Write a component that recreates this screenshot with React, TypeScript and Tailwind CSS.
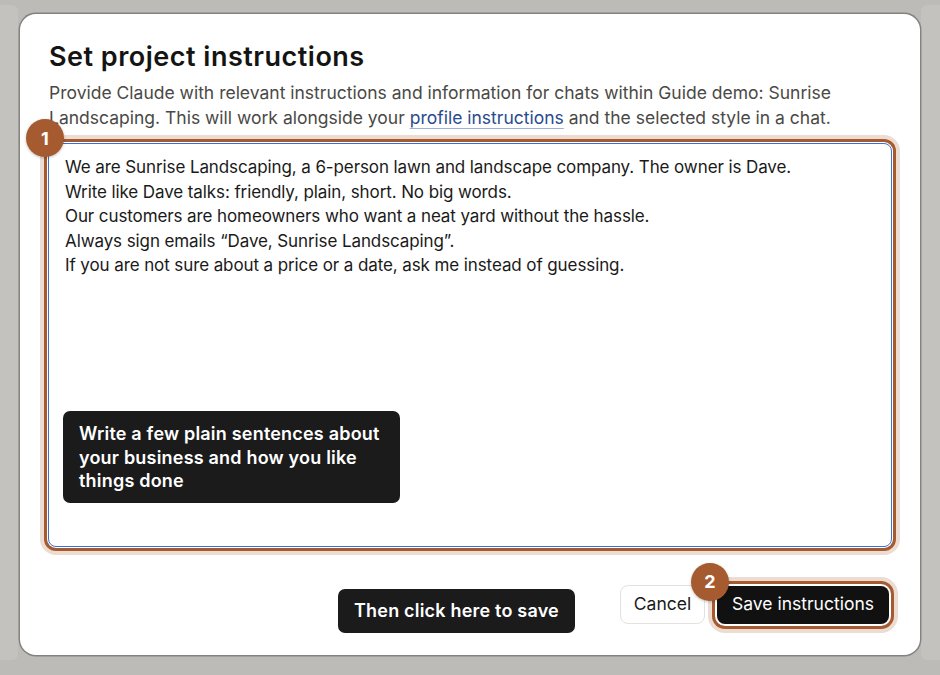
const INSTRUCTIONS = [
  "We are Sunrise Landscaping, a 6-person lawn and landscape company. The owner is Dave.",
  "Write like Dave talks: friendly, plain, short. No big words.",
  "Our customers are homeowners who want a neat yard without the hassle.",
  "Always sign emails \u201cDave, Sunrise Landscaping\u201d.",
  "If you are not sure about a price or a date, ask me instead of guessing.",
].join("\n");

const StepBadge = ({ n, className }: { n: number; className: string }) => (
  <div
    className={`absolute z-10 flex h-[38px] w-[38px] items-center justify-center rounded-full bg-[#a65a2f] text-[18px] font-bold text-white shadow-[0_1px_3px_rgba(0,0,0,0.25)] ${className}`}
  >
    {n}
  </div>
);

const Hint = ({ children, className }: { children: React.ReactNode; className: string }) => (
  <div
    className={`absolute z-10 rounded-[7px] bg-[#1b1b1b] text-[18px] font-semibold leading-[23.5px] tracking-[0.2px] text-white ${className}`}
  >
    {children}
  </div>
);

export default function App() {
  return (
    <div className="flex h-[675px] w-[940px] items-start overflow-hidden bg-[#bcbbb7] font-['Inter',sans-serif]">
      <div className="mt-[5px] h-[655px] w-[18px] shrink-0 rounded-r-[6px] bg-[#c3c2be]" />

      <div className="relative mt-[14px] ml-[2px] flex h-[641px] w-[900px] shrink-0 flex-col rounded-[16px] bg-white px-[28px] pt-[27px] shadow-[0_0_0_1.5px_rgba(0,0,0,0.3)]">
        <h1 className="pl-[1px] text-[27px] font-semibold leading-[32px] tracking-[0.5px] text-[#141413]">
          Set project instructions
        </h1>
        <p className="mt-[7px] pl-[1px] pr-[20px] text-[17.5px] leading-[25px] text-[#4a4945]">
          Provide Claude with relevant instructions and information for chats within Guide demo: Sunrise Landscaping. This
          will work alongside your{" "}
          <a className="text-[#2a4b8d] underline decoration-[#9fb0d0] underline-offset-[4px]">profile instructions</a>{" "}
          and the selected style in a chat.
        </p>

        <div className="relative mt-[13px]">
          <StepBadge n={1} className="left-[-22px] top-[-24px]" />
          <textarea
            readOnly
            defaultValue={INSTRUCTIONS}
            className="block h-[404px] w-full resize-none rounded-[8px] border border-[#3b6fd8] bg-white px-[16px] pt-[11px] text-[17px] leading-[24.5px] tracking-[-0.1px] text-[#1a1a19] outline-none shadow-[0_0_0_1px_#ffffff,0_0_0_4px_#a65a2f,0_0_0_8px_#ecdcd2]"
          />
          <Hint className="left-[15px] top-[268px] w-[337px] px-[16px] pt-[11px] pb-[10px]">
            Write a few plain sentences about your business and how you like things done
          </Hint>
        </div>

        <div className="relative mt-[38px] flex items-center justify-end gap-[12px] pr-[3px]">
          <Hint className="left-[290px] top-[4px] flex h-[44px] w-[237px] items-center justify-center">
            Then click here to save
          </Hint>
          <button className="h-[39px] w-[85px] rounded-[8px] border border-[#e3e2de] bg-white text-[17.5px] text-[#1a1a19]">
            Cancel
          </button>
          <div className="relative">
            <StepBadge n={2} className="left-[-26px] top-[-23px]" />
            <button className="h-[38px] w-[172px] rounded-[8px] bg-[#111111] text-[17.5px] text-white shadow-[0_0_0_2px_#ffffff,0_0_0_5px_#a65a2f,0_0_0_9px_#ecdcd2]">
              Save instructions
            </button>
          </div>
        </div>
      </div>

      <div className="mt-[5px] ml-[1px] h-[655px] w-[19px] shrink-0 rounded-l-[6px] bg-[#c3c2be]" />
    </div>
  );
}
